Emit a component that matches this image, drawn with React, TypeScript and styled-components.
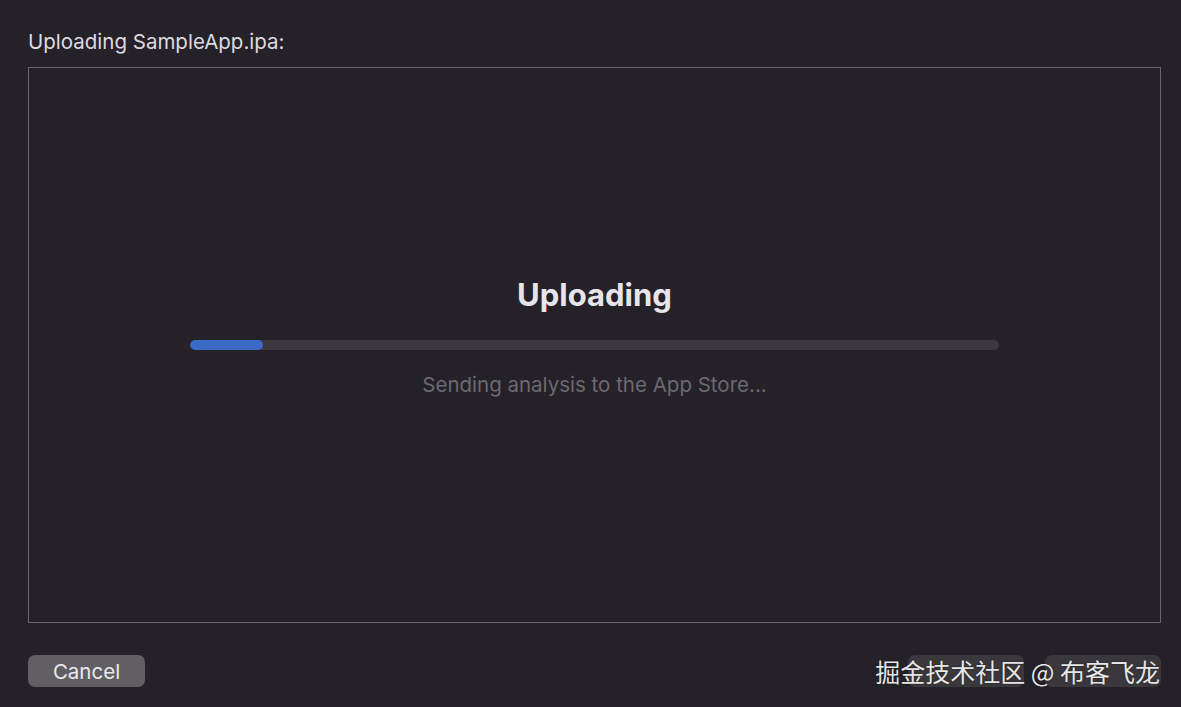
import styled, { createGlobalStyle } from "styled-components";

const GlobalStyle = createGlobalStyle`
  html, body {
    margin: 0;
    padding: 0;
    background: #252128;
  }
  body {
    font-family: Inter, "Noto Sans", "Liberation Sans", sans-serif;
    -webkit-font-smoothing: antialiased;
  }
`;

const Window = styled.div`
  position: relative;
  width: 1181px;
  height: 707px;
  box-sizing: border-box;
  padding: 30px 20px 0 28px;
  display: flex;
  flex-direction: column;
  background: #252128;
  overflow: hidden;
`;

const Heading = styled.div`
  font-size: 20.5px;
  line-height: 24px;
  color: #dddbe0;
`;

const Panel = styled.div`
  margin-top: 13px;
  height: 556px;
  box-sizing: border-box;
  border: 1px solid #68666b;
  display: flex;
  flex-direction: column;
  align-items: center;
  padding-top: 210px;
`;

const Title = styled.div`
  font-size: 31px;
  line-height: 34px;
  font-weight: 700;
  color: #e7e5ea;
`;

const Track = styled.div`
  margin-top: 28px;
  width: 809px;
  height: 10px;
  border-radius: 5px;
  background: #3b393e;
  overflow: hidden;
`;

const Fill = styled.div`
  height: 100%;
  border-radius: 5px;
  background: #3b69c6;
`;

const Status = styled.div`
  margin-top: 23px;
  font-size: 20.5px;
  line-height: 24px;
  color: #6c696f;
`;

const Footer = styled.div`
  margin-top: 32px;
  display: flex;
  align-items: center;
  gap: 21px;
`;

const Button = styled.button<{ $muted?: boolean }>`
  height: 32px;
  width: ${(p) => (p.$muted ? "116px" : "117px")};
  border: none;
  border-radius: 7px;
  padding: 0;
  font-family: inherit;
  font-size: 20.5px;
  color: #ebe9ee;
  background: ${(p) => (p.$muted ? "#3a383d" : "#615f64")};
`;

const Spacer = styled.div`
  flex: 1;
`;

const Watermark = styled.div`
  position: absolute;
  right: 21px;
  bottom: 20px;
  font-family: "Noto Sans CJK SC", "Noto Sans", sans-serif;
  font-size: 25px;
  line-height: 32px;
  color: #e6e6e6;
  text-shadow: 0 0 2px rgba(0, 0, 0, 0.6);
  white-space: nowrap;
`;

export default function App() {
  const progress = 0.09;
  return (
    <>
      <GlobalStyle />
      <Window>
        <Heading>Uploading SampleApp.ipa:</Heading>
        <Panel>
          <Title>Uploading</Title>
          <Track>
            <Fill style={{ width: `${progress * 100}%` }} />
          </Track>
          <Status>Sending analysis to the App Store...</Status>
        </Panel>
        <Footer>
          <Button>Cancel</Button>
          <Spacer />
          <Button $muted disabled aria-label="Back" />
          <Button $muted disabled aria-label="Next" />
        </Footer>
        <Watermark>掘金技术社区 @ 布客飞龙</Watermark>
      </Window>
    </>
  );
}
